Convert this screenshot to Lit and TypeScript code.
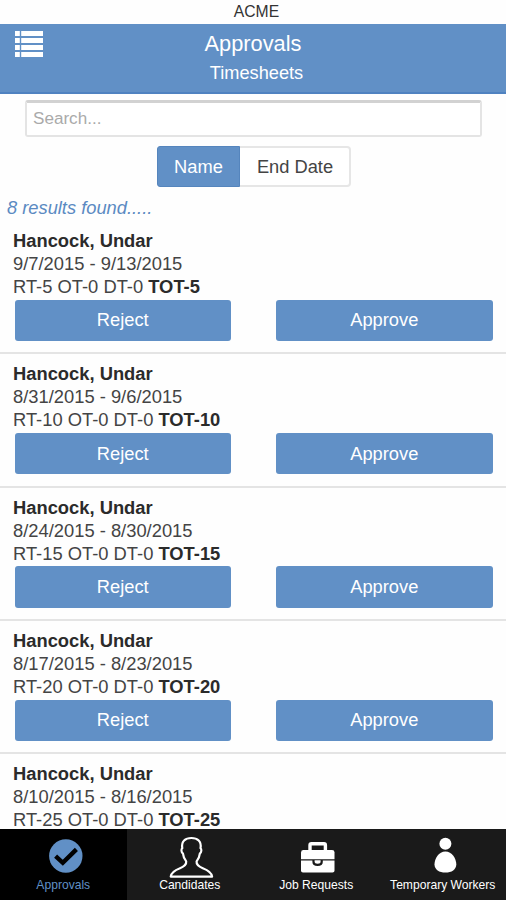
import { LitElement, html, css, svg } from "lit";
import { customElement, property, state } from "lit/decorators.js";
import { classMap } from "lit/directives/class-map.js";

interface Timesheet {
  name: string;
  period: string;
  hours: string;
  total: string;
}

const timesheets: Timesheet[] = [
  { name: "Hancock, Undar", period: "9/7/2015 - 9/13/2015", hours: "RT-5 OT-0 DT-0", total: "TOT-5" },
  { name: "Hancock, Undar", period: "8/31/2015 - 9/6/2015", hours: "RT-10 OT-0 DT-0", total: "TOT-10" },
  { name: "Hancock, Undar", period: "8/24/2015 - 8/30/2015", hours: "RT-15 OT-0 DT-0", total: "TOT-15" },
  { name: "Hancock, Undar", period: "8/17/2015 - 8/23/2015", hours: "RT-20 OT-0 DT-0", total: "TOT-20" },
  { name: "Hancock, Undar", period: "8/10/2015 - 8/16/2015", hours: "RT-25 OT-0 DT-0", total: "TOT-25" },
];

const tabs = [
  {
    label: "Approvals",
    icon: svg`<circle cx="26.8" cy="19" r="16.7" fill="#6190c6"/>
      <path d="M16.6 19.2 L23.8 25.8 L37.4 12.4" fill="none" stroke="#000" stroke-width="4.4"/>`,
  },
  {
    label: "Candidates",
    icon: svg`<path d="M4.7 40.8 C5.2 37 9 34.3 14 32.4 C18.6 30.6 20.6 29 20.2 25.6 C18.2 23.2 17.2 20.3 16.9 17.6 C15.1 16.7 15.1 13.2 16.3 12.4 C15 5.4 19.4 2.2 25.4 2.2 C31.4 2.2 35.8 5.4 34.5 12.4 C35.7 13.2 35.7 16.7 33.9 17.6 C33.6 20.3 32.6 23.2 30.6 25.6 C30.2 29 32.2 30.6 36.8 32.4 C41.8 34.3 45.6 37 46.1 40.8 Z"
      transform="translate(0 -1.2)" fill="none" stroke="#fff" stroke-width="2.2" stroke-linejoin="round"/>`,
  },
  {
    label: "Job Requests",
    icon: svg`<path d="M18 14 V8.2 Q18 6.8 19.4 6.8 H32 Q33.4 6.8 33.4 8.2 V14" fill="none" stroke="#fff" stroke-width="3.4"/>
      <path d="M9 22.2 V15.4 Q9 13 11.5 13 H40 Q42.5 13 42.5 15.4 V22.2 Z" fill="#fff"/>
      <path d="M9 23.6 H20.4 V25 Q20.4 29 25.6 29 Q30.8 29 30.8 25 V23.6 H42.5 V33.8 Q42.5 35.6 40.5 35.6 H11 Q9 35.6 9 33.8 Z" fill="#fff"/>
      <path d="M22.6 23.2 H28.6 V24.6 Q28.6 26.8 25.6 26.8 Q22.6 26.8 22.6 24.6 Z" fill="#fff"/>`,
  },
  {
    label: "Temporary Workers",
    icon: svg`<circle cx="26.4" cy="6.8" r="6" fill="#fff"/>
      <path d="M26.4 14.4 C33 14.4 37.3 21.7 37.3 27.2 C37.3 32.6 32.6 35.6 26.4 35.6 C20.2 35.6 15.5 32.6 15.5 27.2 C15.5 21.7 19.8 14.4 26.4 14.4 Z" fill="#fff"/>`,
  },
];

@customElement("timesheet-row")
class TimesheetRow extends LitElement {
  @property({ attribute: false }) sheet!: Timesheet;

  static styles = css`
    :host {
      display: block;
      box-sizing: border-box;
      height: 133.3px;
      padding: 8px 13.5px 0 14.5px;
      border-bottom: 2px solid #e4e4e4;
    }
    .line {
      margin-left: -1.5px;
      font-size: 18.35px;
      line-height: 23.1px;
      white-space: nowrap;
      color: #444;
    }
    .strong {
      font-weight: bold;
      color: #2b2b2b;
    }
    .actions {
      display: grid;
      grid-template-columns: 1fr 1fr;
      column-gap: 45px;
      margin-top: 1.4px;
    }
    .action {
      height: 41.5px;
      padding: 0;
      border: 0;
      border-radius: 3px;
      background: #6190c6;
      color: #fff;
      font: 18.3px "Liberation Sans", Arial, sans-serif;
    }
  `;

  render() {
    return html`
      <div class="line strong">${this.sheet.name}</div>
      <div class="line">${this.sheet.period}</div>
      <div class="line">${this.sheet.hours} <span class="strong">${this.sheet.total}</span></div>
      <div class="actions">
        <button class="action">Reject</button>
        <button class="action">Approve</button>
      </div>
    `;
  }
}

@customElement("app-root")
class AppRoot extends LitElement {
  @state() private sort = "Name";
  @state() private tab = "Approvals";

  static styles = css`
    :host {
      display: flex;
      flex-direction: column;
      height: 900px;
      overflow: hidden;
      background: #fefefe;
      font-family: "Liberation Sans", Arial, sans-serif;
    }
    .company {
      flex: none;
      height: 24px;
      padding-left: 7px;
      text-align: center;
      font-size: 15.7px;
      line-height: 24px;
      color: #333;
    }
    .header {
      flex: none;
      display: grid;
      grid-template-columns: 60px 1fr 60px;
      box-sizing: border-box;
      height: 69.5px;
      border-bottom: 2px solid #4f82c0;
      background: #6190c6;
      color: #fff;
      text-align: center;
    }
    .menu {
      width: 28px;
      height: 26px;
      margin: 7px 0 0 15.4px;
    }
    .title {
      padding-top: 6px;
      font-size: 21.8px;
      line-height: 28px;
    }
    .subtitle {
      padding-left: 7px;
      font-size: 18.2px;
      line-height: 30px;
    }
    .search {
      flex: none;
      box-sizing: border-box;
      width: 457px;
      height: 37px;
      margin: 6.5px 0 0 25px;
      padding: 0 6px;
      border: 2px solid #e4e4e4;
      border-top: 3px solid #d2d2d2;
      border-radius: 3px;
      outline: none;
      background: #fff;
      font: 17.1px "Liberation Sans", Arial, sans-serif;
      color: #444;
    }
    .search::placeholder {
      color: #aaa;
    }
    .sorts {
      flex: none;
      display: flex;
      justify-content: center;
      margin: 9px 0 0 1px;
    }
    .sort {
      box-sizing: border-box;
      width: 111px;
      height: 41px;
      padding: 0 0 0 2px;
      border: 2px solid #e6e6e6;
      border-left: 0;
      border-radius: 0 4px 4px 0;
      background: #fff;
      font: 18.3px "Liberation Sans", Arial, sans-serif;
      color: #444;
    }
    .sort.active {
      width: 83px;
      padding-left: 1px;
      border: 1px solid #5585bd;
      border-radius: 3px 0 0 3px;
      background: #6190c6;
      color: #fff;
    }
    .count {
      flex: none;
      height: 34px;
      padding-left: 7px;
      font-size: 18.3px;
      font-style: italic;
      line-height: 42px;
      color: #5b8ac2;
    }
    .list {
      flex: 1;
      min-height: 0;
      overflow: hidden;
    }
    .tabs {
      flex: none;
      display: grid;
      grid-template-columns: repeat(4, 1fr);
      height: 71.5px;
      background: #1a1a1a;
    }
    .tab {
      display: flex;
      flex-direction: column;
      align-items: center;
      color: #fff;
      font-size: 12.1px;
      line-height: 16px;
      white-space: nowrap;
    }
    .tab.active {
      background: #000;
      color: #6190c6;
    }
    .icon {
      width: 48px;
      height: 40px;
      margin-top: 8px;
    }
  `;

  render() {
    return html`
      <div class="company">ACME</div>
      <div class="header">
        <svg class="menu" viewBox="0 0 28 26" fill="#fff">
          ${[0, 7, 14, 21].map(
            (y) => svg`<rect x="0" y=${y} width="4.8" height="5"/><rect x="6.2" y=${y} width="21.8" height="5"/>`,
          )}
        </svg>
        <div>
          <div class="title">Approvals</div>
          <div class="subtitle">Timesheets</div>
        </div>
      </div>
      <input class="search" placeholder="Search..." />
      <div class="sorts">
        ${["Name", "End Date"].map(
          (s) => html`<button class=${classMap({ sort: true, active: s === this.sort })}>${s}</button>`,
        )}
      </div>
      <div class="count">8 results found.....</div>
      <div class="list">
        ${timesheets.map((t) => html`<timesheet-row .sheet=${t}></timesheet-row>`)}
      </div>
      <div class="tabs">
        ${tabs.map(
          (t) => html`<div class=${classMap({ tab: true, active: t.label === this.tab })}>
            <svg class="icon" viewBox="0 0 48 40" overflow="visible">${t.icon}</svg>
            <span>${t.label}</span>
          </div>`,
        )}
      </div>
    `;
  }
}
